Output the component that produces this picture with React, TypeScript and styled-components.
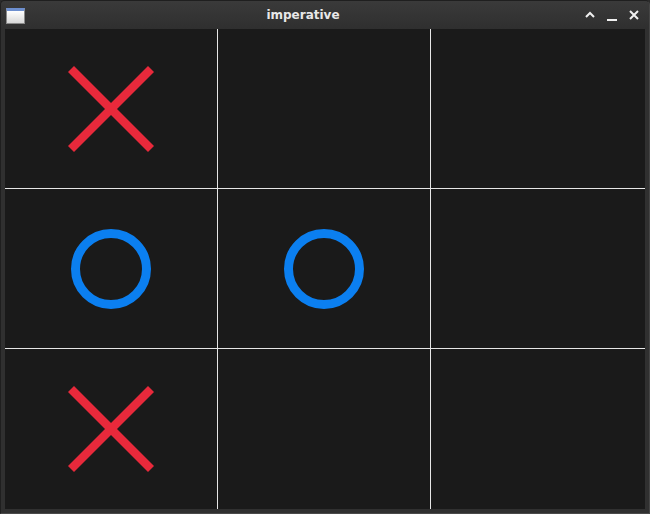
import React from "react";
import styled, { createGlobalStyle } from "styled-components";

type Mark = "x" | "o" | null;

const board: Mark[] = ["x", null, null, "o", "o", null, "x", null, null];

const GlobalStyle = createGlobalStyle`
  html, body {
    margin: 0;
    padding: 0;
    background: #2b2b2b;
  }
`;

const Window = styled.div`
  width: 650px;
  height: 514px;
  box-sizing: border-box;
  display: flex;
  flex-direction: column;
  background: #303030;
  border-radius: 5px 5px 0 0;
  border: 1px solid #1f1f1f;
  border-bottom-color: #4a4a4a;
  border-right-color: #454545;
  overflow: hidden;
`;

const TitleBar = styled.div`
  height: 28px;
  flex: none;
  display: flex;
  align-items: center;
  padding: 0 8px 0 5px;
  background: linear-gradient(#3a3a3a, #2f2f2f);
  color: #e8e8e8;
  font-family: "DejaVu Sans", "Liberation Sans", sans-serif;
  font-weight: bold;
  font-size: 12px;
`;

const Title = styled.div`
  flex: 1;
  text-align: center;
  padding-right: 2px;
  margin-top: -1px;
`;

const AppIcon = styled.div`
  width: 19px;
  height: 16px;
  box-sizing: border-box;
  border: 1px solid #8a8a8a;
  border-top: 3px solid #6d8fcf;
  background: linear-gradient(#ffffff, #d8d8d8);
  margin-top: 2px;
`;

const Controls = styled.div`
  display: flex;
  gap: 8px;
  align-items: center;
`;

const Content = styled.div`
  flex: 1;
  padding: 0 4px 4px 4px;
  display: flex;
`;

const Board = styled.div`
  display: grid;
  grid-template-columns: 212px 212px 214px;
  grid-template-rows: 159px 159px 160px;
  gap: 1px;
  background: #e6e6e6;
  width: 640px;
  height: 480px;
`;

const Cell = styled.div`
  background: #1a1a1a;
  display: flex;
  align-items: center;
  justify-content: center;
`;

const Cross = () => (
  <svg width="90" height="90" viewBox="0 0 90 90">
    <g stroke="#e8293b" strokeWidth="8.5" strokeLinecap="butt">
      <line x1="5" y1="5" x2="85" y2="85" />
      <line x1="85" y1="5" x2="5" y2="85" />
    </g>
  </svg>
);

const Nought = () => (
  <svg width="90" height="90" viewBox="0 0 90 90">
    <circle cx="45" cy="45" r="35.5" fill="none" stroke="#0b7ff0" strokeWidth="9" />
  </svg>
);

const App: React.FC = () => {
  return (
    <>
      <GlobalStyle />
      <Window>
        <TitleBar>
          <AppIcon />
          <Title>imperative</Title>
          <Controls>
            <svg width="14" height="14" viewBox="0 0 14 14">
              <path d="M3 9 L7 5 L11 9" stroke="#f0f0f0" strokeWidth="2" fill="none" />
            </svg>
            <svg width="14" height="14" viewBox="0 0 14 14">
              <path d="M2 12 H12" stroke="#f0f0f0" strokeWidth="2" fill="none" />
            </svg>
            <svg width="14" height="14" viewBox="0 0 14 14">
              <path d="M3 3 L11 11 M11 3 L3 11" stroke="#f0f0f0" strokeWidth="2" fill="none" />
            </svg>
          </Controls>
        </TitleBar>
        <Content>
          <Board>
            {board.map((m, i) => (
              <Cell key={i}>{m === "x" ? <Cross /> : m === "o" ? <Nought /> : null}</Cell>
            ))}
          </Board>
        </Content>
      </Window>
    </>
  );
};

export default App;
